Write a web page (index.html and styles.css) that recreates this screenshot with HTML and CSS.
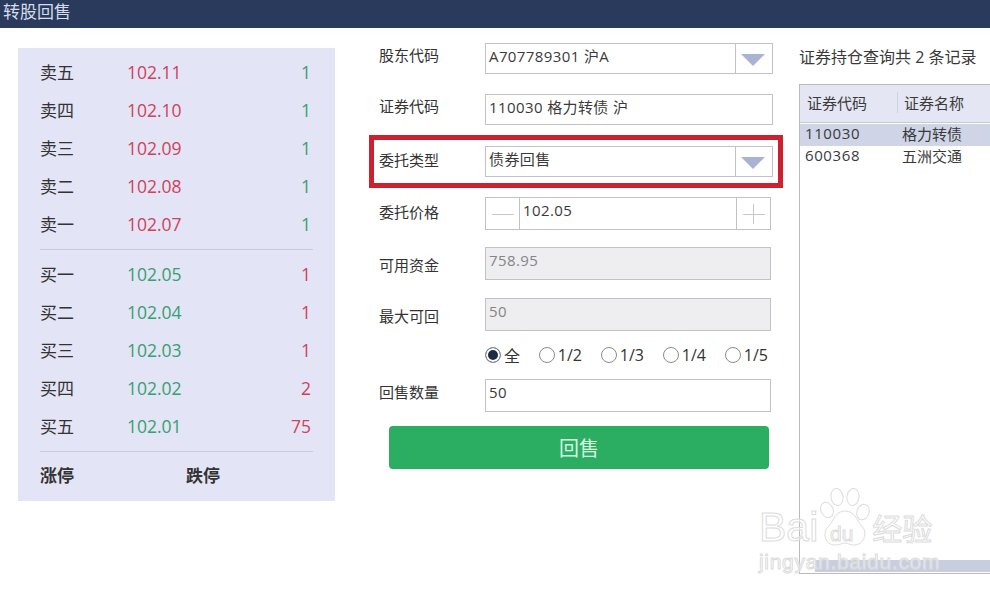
FILE: index.html
```html
<!DOCTYPE html>
<html lang="zh-CN">
<head>
    <meta charset="UTF-8">
    <title>转股回售</title>
    <link rel="stylesheet" href="styles.css">
</head>
<body>
    <div class="title-bar">转股回售</div>

    <div class="main">
        <!-- Five level quotes -->
        <div class="quotes">
            <div class="quote-row"><span class="level">卖五</span><span class="price red">102.11</span><span class="qty green">1</span></div>
            <div class="quote-row"><span class="level">卖四</span><span class="price red">102.10</span><span class="qty green">1</span></div>
            <div class="quote-row"><span class="level">卖三</span><span class="price red">102.09</span><span class="qty green">1</span></div>
            <div class="quote-row"><span class="level">卖二</span><span class="price red">102.08</span><span class="qty green">1</span></div>
            <div class="quote-row"><span class="level">卖一</span><span class="price red">102.07</span><span class="qty green">1</span></div>
            <div class="divider"></div>
            <div class="quote-row"><span class="level">买一</span><span class="price green">102.05</span><span class="qty red">1</span></div>
            <div class="quote-row"><span class="level">买二</span><span class="price green">102.04</span><span class="qty red">1</span></div>
            <div class="quote-row"><span class="level">买三</span><span class="price green">102.03</span><span class="qty red">1</span></div>
            <div class="quote-row"><span class="level">买四</span><span class="price green">102.02</span><span class="qty red">2</span></div>
            <div class="quote-row"><span class="level">买五</span><span class="price green">102.01</span><span class="qty red">75</span></div>
            <div class="divider"></div>
            <div class="limit-row"><span class="limit">涨停</span><span>跌停</span></div>
        </div>

        <!-- Order form -->
        <div class="form">
            <div class="form-row row-account">
                <label>股东代码</label>
                <div class="field wide">A707789301 沪A<span class="caret"></span></div>
            </div>
            <div class="form-row row-code">
                <label>证券代码</label>
                <div class="field wide">110030 格力转债 沪</div>
            </div>
            <div class="marked">
                <div class="form-row">
                    <label>委托类型</label>
                    <div class="field wide">债券回售<span class="caret"></span></div>
                </div>
            </div>
            <div class="form-row row-price">
                <label>委托价格</label>
                <div class="field stepper">
                    <span class="step minus"></span>
                    <span class="step-value">102.05</span>
                    <span class="step plus"></span>
                </div>
            </div>
            <div class="form-row row-funds">
                <label>可用资金</label>
                <div class="field disabled">758.95</div>
            </div>
            <div class="form-row row-max">
                <label>最大可回</label>
                <div class="field disabled">50</div>
            </div>
            <div class="radios">
                <span class="radio-item"><span class="radio checked"></span>全</span>
                <span class="radio-item"><span class="radio"></span>1/2</span>
                <span class="radio-item"><span class="radio"></span>1/3</span>
                <span class="radio-item"><span class="radio"></span>1/4</span>
                <span class="radio-item"><span class="radio"></span>1/5</span>
            </div>
            <div class="form-row row-amount">
                <label>回售数量</label>
                <div class="field amount">50</div>
            </div>
            <button class="submit">回售</button>
        </div>

        <!-- Holdings -->
        <div class="holdings">
            <div class="holdings-title">证券持仓查询共 2 条记录</div>
            <div class="table">
                <div class="table-head">
                    <span class="head-code">证券代码</span>
                    <span class="head-name">证券名称</span>
                </div>
                <div class="table-row selected"><span class="cell-code">110030</span><span>格力转债</span></div>
                <div class="table-row"><span class="cell-code">600368</span><span>五洲交通</span></div>
                <div class="scrollbar"></div>
            </div>
        </div>
    </div>

    <!-- Watermark -->
    <div class="watermark">
        <div class="mark-top">
            <span>Bai</span>
            <svg class="paw" width="54" height="60" viewBox="0 0 54 60">
                <ellipse cx="9" cy="22" rx="6" ry="8" transform="rotate(-25 9 22)"/>
                <ellipse cx="19" cy="9" rx="6" ry="8.5" transform="rotate(-8 19 9)"/>
                <ellipse cx="35" cy="9" rx="6" ry="8.5" transform="rotate(8 35 9)"/>
                <ellipse cx="45" cy="24" rx="6" ry="8" transform="rotate(20 45 24)"/>
                <path d="M27 23 C37 23 38 32 44 38 C50 45 46 57 36 57 C31 57 30 55 27 55 C24 55 22 57 17 57 C7 57 4 45 10 39 C16 33 17 23 27 23 Z"/>
            </svg>
            <span class="mark-du">du</span>
            <span class="mark-cn">经验</span>
        </div>
        <div class="mark-url">jingyan.baidu.com</div>
    </div>
</body>
</html>
```

FILE: styles.css
```css
body {
    margin: 0;
    height: 595px;
    overflow: hidden;
    position: relative;
    background: #fff;
    color: #3a3a3a;
    font-family: "Open Sans", "Noto Sans CJK SC", sans-serif;
    font-size: 15px;
}
.title-bar {
    height: 28px;
    line-height: 23px;
    padding-left: 3px;
    background: #2a3a5c;
    color: #d5dcec;
    font-size: 17px;
}
.main {
    display: flex;
    align-items: flex-start;
    padding-top: 15px;
}

/* quotes */
.quotes {
    flex: none;
    box-sizing: border-box;
    width: 317px;
    height: 453px;
    margin: 5px 0 0 18px;
    padding: 5px 22px 0;
    background: #e3e4f6;
    font-size: 17.5px;
}
.quote-row {
    display: flex;
    align-items: center;
    height: 38px;
}
.level {
    width: 87px;
    padding-bottom: 2px;
    color: #333;
    font-size: 17px;
}
.price {
    flex: 1;
}
.qty {
    padding-right: 2px;
}
.red {
    color: #cf4257;
}
.green {
    color: #37a06f;
}
.divider {
    height: 1px;
    margin: 6px 0 5px;
    background: #c6cadf;
}
.limit-row {
    box-sizing: border-box;
    display: flex;
    align-items: center;
    height: 36px;
    padding-bottom: 2px;
    color: #333;
    font-size: 17px;
    font-weight: bold;
}
.limit {
    width: 146px;
}

/* form */
.form {
    flex: none;
    width: 394px;
    margin-left: 44px;
}
.form-row {
    display: flex;
    align-items: center;
}
.form-row label {
    box-sizing: border-box;
    width: 106px;
    font-size: 15px;
    color: #333;
    flex-shrink: 0;
}
.row-account label,
.row-code label,
.row-amount label {
    padding-bottom: 8px;
}
.marked label {
    padding-bottom: 4px;
}
.row-price label {
    padding-bottom: 4px;
}
.row-funds label,
.row-max label {
    padding-top: 2px;
}
.field {
    box-sizing: border-box;
    width: 286px;
    height: 33px;
    padding-left: 3px;
    line-height: 25px;
    letter-spacing: 0.4px;
    border: 1px solid #c2c2c6;
    background: #fff;
    position: relative;
}
.wide {
    width: 288px;
    height: 31px;
}
.caret {
    position: absolute;
    top: 0;
    right: 0;
    bottom: 0;
    width: 36px;
    border-left: 1px solid #c2c2c6;
}
.caret::after {
    content: "";
    position: absolute;
    top: 10px;
    left: 5px;
    border-top: 12px solid #a9b3d3;
    border-left: 12px solid transparent;
    border-right: 12px solid transparent;
}
.row-code {
    margin-top: 20px;
}
.marked {
    margin: 10px -10px 0 -10px;
    padding: 6px 5px 6px 5px;
    border: 5px solid #cd2130;
}
.row-price {
    margin-top: 9px;
}
.stepper {
    display: flex;
    padding: 0;
}
.step {
    width: 33px;
    position: relative;
    flex-shrink: 0;
}
.step-value {
    flex: 1;
    padding-left: 3px;
    border-left: 1px solid #c2c2c6;
    border-right: 1px solid #c2c2c6;
}
.minus::before,
.plus::before {
    content: "";
    position: absolute;
    left: 6px;
    right: 5px;
    top: 16px;
    height: 1px;
    background: #c8c8c8;
}
.plus::after {
    content: "";
    position: absolute;
    left: 16px;
    top: 6px;
    bottom: 5px;
    width: 1px;
    background: #c8c8c8;
}
.row-funds {
    margin-top: 17px;
}
.row-max {
    margin-top: 18px;
}
.disabled {
    background: #eeedf0;
    color: #858585;
}
.radios {
    display: flex;
    justify-content: space-between;
    align-items: center;
    width: 283px;
    height: 24px;
    margin: 12px 0 12px 106px;
    font-size: 16px;
}
.radio-item {
    display: flex;
    align-items: center;
    gap: 3px;
    color: #333;
}
.radio {
    box-sizing: border-box;
    width: 16px;
    height: 16px;
    border: 1px solid #8c8c8c;
    border-radius: 50%;
    background: #fff;
}
.radio.checked {
    background: #1f2a44;
    box-shadow: inset 0 0 0 2px #fff;
}
.submit {
    display: block;
    width: 380px;
    height: 43px;
    margin: 14px 0 0 10px;
    border: none;
    border-radius: 4px;
    background: #2bae62;
    color: #d6f5e2;
    font-family: inherit;
    font-size: 20px;
}

/* holdings */
.holdings {
    flex: none;
    width: 191px;
    margin-left: 26px;
}
.holdings-title {
    height: 41px;
    line-height: 28px;
    font-size: 16px;
    white-space: nowrap;
}
.table {
    box-sizing: border-box;
    display: flex;
    flex-direction: column;
    height: 490px;
    border: 1px solid #bbb;
    border-right: none;
    font-size: 15px;
}
.table-head {
    box-sizing: border-box;
    display: flex;
    align-items: center;
    height: 38px;
    padding-bottom: 2px;
    margin-bottom: 1px;
    border-bottom: 1px solid #c8c8c8;
    background: #e4e6f3;
}
.head-code {
    box-sizing: border-box;
    width: 98px;
    padding-left: 7px;
    border-right: 1px solid #cfd1de;
}
.head-name {
    padding-left: 6px;
}
.table-row {
    box-sizing: border-box;
    display: flex;
    align-items: center;
    height: 22px;
    padding: 0 0 4px 5px;
    white-space: nowrap;
}
.selected {
    background: #cfd4e6;
}
.cell-code {
    width: 97px;
    letter-spacing: 0.6px;
}
.scrollbar {
    height: 12px;
    margin: auto 0 1px 15px;
    background: #c8cde0;
}

/* watermark sits over the table */
.watermark {
    position: absolute;
    left: 759px;
    top: 488px;
    width: 180px;
    color: rgba(255, 255, 255, 0.55);
    -webkit-text-stroke: 1px #dcdcdc;
    pointer-events: none;
}
.mark-top {
    display: flex;
    align-items: flex-end;
    height: 60px;
    position: relative;
    font-family: "Liberation Sans", sans-serif;
    font-size: 41px;
    line-height: 41px;
}
.paw {
    flex: none;
    fill: rgba(255, 255, 255, 0.55);
    stroke: #dcdcdc;
    stroke-width: 1;
}
.mark-du {
    position: absolute;
    left: 71px;
    top: 35px;
    font-size: 21px;
    line-height: 21px;
}
.mark-cn {
    font-family: "Noto Sans CJK SC", sans-serif;
    font-size: 30px;
}
.mark-url {
    margin-top: 2px;
    font-family: "Liberation Sans", sans-serif;
    font-size: 21px;
    line-height: 24px;
    letter-spacing: 0.7px;
}
```
